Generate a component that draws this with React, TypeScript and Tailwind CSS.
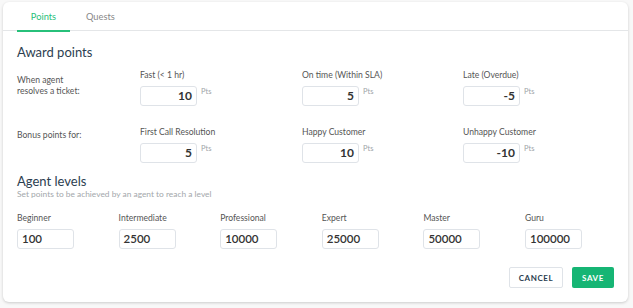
import React from "react";

const font = { fontFamily: "Lato, 'Liberation Sans', sans-serif" };

function PtsInput({ value }: { value: string }) {
  return (
    <div className="flex items-start">
      <div className="w-[57px] h-[20px] border border-[#dfe3e8] rounded-[3px] flex items-center justify-end pr-[4px] text-[12px] font-bold text-[#333]">
        {value}
      </div>
      <span className="ml-[4px] mt-[1px] text-[7.5px] text-[#a0a4a8] leading-[9px]">Pts</span>
    </div>
  );
}

function Field({ label, value, w = "w-[162px]" }: { label: string; value: string; w?: string }) {
  return (
    <div className={`${w} flex-none`}>
      <div className="text-[8.6px] text-[#555] h-[11px] leading-[11px]">{label}</div>
      <div className="mt-[5px]">
        <PtsInput value={value} />
      </div>
    </div>
  );
}

function Level({ label, value, last }: { label: string; value: string; last?: boolean }) {
  return (
    <div className={last ? "flex-none w-[70px]" : "flex-none w-[101.6px]"}>
      <div className="text-[8.6px] text-[#555] h-[11px] leading-[11px]">{label}</div>
      <div className="mt-[5px] w-[57px] h-[20px] border border-[#dfe3e8] rounded-[3px] flex items-center pl-[4px] text-[11.5px] font-semibold text-[#333]">
        {value}
      </div>
    </div>
  );
}

export default function App() {
  return (
    <div className="w-[633px] h-[308px] bg-[#f8f8f8] pt-[2px] pl-[3px]" style={font}>
      <div className="w-[625px] h-[300px] bg-white rounded-[6px] shadow-[0_1px_3px_rgba(0,0,0,0.18)] flex flex-col">
        <div className="h-[29px] border-b border-[#e4e6e8] flex pl-[14px] flex-none">
          <div className="w-[53px] h-[29px] flex items-center justify-center text-[9.3px] text-[#27c07a] border-b-2 border-[#27c07a] relative top-[1px]">
            Points
          </div>
          <div className="ml-[16px] h-[29px] flex items-center text-[9.3px] text-[#888]">Quests</div>
        </div>
        <div className="px-[14px]">
          <div className="mt-[13px] text-[13px] text-[#2c3e50] leading-[16px]">Award points</div>
          <div className="mt-[10px] flex">
            <div className="w-[123px] flex-none text-[8.6px] text-[#555] leading-[11px] pt-[5px]">
              When agent
              <br />
              resolves a ticket:
            </div>
            <Field label="Fast (< 1 hr)" value="10" />
            <Field label="On time (Within SLA)" value="5" w="w-[161px]" />
            <Field label="Late (Overdue)" value="-5" w="w-[120px]" />
          </div>
          <div className="mt-[21px] flex">
            <div className="w-[123px] flex-none text-[8.6px] text-[#555] leading-[11px] pt-[3px]">Bonus points for:</div>
            <Field label="First Call Resolution" value="5" />
            <Field label="Happy Customer" value="10" w="w-[161px]" />
            <Field label="Unhappy Customer" value="-10" w="w-[120px]" />
          </div>
          <div className="mt-[11px] text-[13px] text-[#2c3e50] leading-[15px]">Agent levels</div>
          <div className="text-[8.4px] text-[#a3a7ab] leading-[10px]">Set points to be achieved by an agent to reach a level</div>
          <div className="mt-[14px] flex">
            <Level label="Beginner" value="100" />
            <Level label="Intermediate" value="2500" />
            <Level label="Professional" value="10000" />
            <Level label="Expert" value="25000" />
            <Level label="Master" value="50000" />
            <Level label="Guru" value="100000" last />
          </div>
          <div className="mt-[18px] flex justify-end pr-[0px] gap-[9px]">
            <button className="w-[54px] h-[21px] border border-[#dfe3e8] rounded-[2px] text-[8px] font-bold tracking-[0.6px] text-[#2c3e50] bg-white">
              CANCEL
            </button>
            <button className="w-[42px] h-[21px] rounded-[2px] text-[8px] font-bold tracking-[0.6px] text-white bg-[#16b574]">
              SAVE
            </button>
          </div>
        </div>
      </div>
    </div>
  );
}
